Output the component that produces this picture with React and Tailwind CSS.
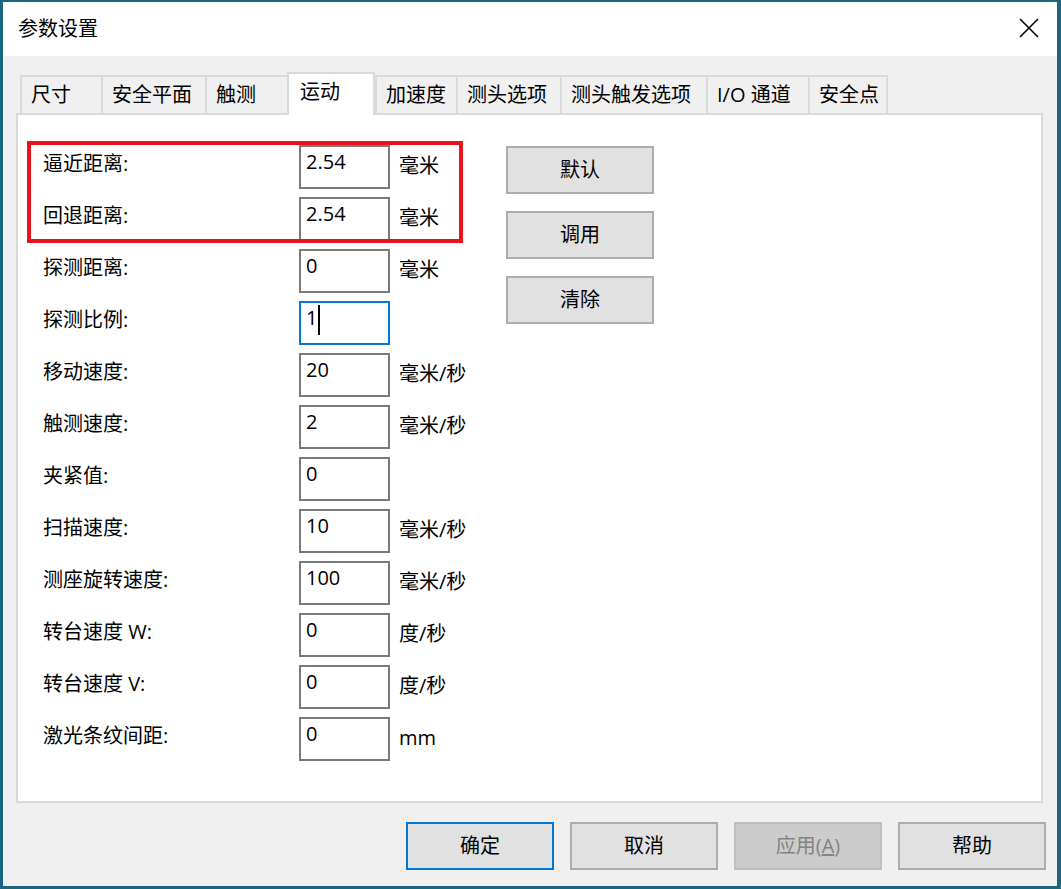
import React from "react";

const tabs = [
  { name: "尺寸", w: "w-[81px]" },
  { name: "安全平面", w: "w-[104px]" },
  { name: "触测", w: "w-[82px]" },
  { name: "运动", w: "w-[88px]", active: true },
  { name: "加速度", w: "w-[81px]" },
  { name: "测头选项", w: "w-[104px]" },
  { name: "测头触发选项", w: "w-[146px]" },
  { name: "I/O 通道", w: "w-[102px]" },
  { name: "安全点", w: "w-[80px]" },
];

const rows = [
  { label: "逼近距离:", value: "2.54", unit: "毫米" },
  { label: "回退距离:", value: "2.54", unit: "毫米" },
  { label: "探测距离:", value: "0", unit: "毫米" },
  { label: "探测比例:", value: "1", unit: "", focus: true },
  { label: "移动速度:", value: "20", unit: "毫米/秒" },
  { label: "触测速度:", value: "2", unit: "毫米/秒" },
  { label: "夹紧值:", value: "0", unit: "" },
  { label: "扫描速度:", value: "10", unit: "毫米/秒" },
  { label: "测座旋转速度:", value: "100", unit: "毫米/秒" },
  { label: "转台速度 W:", value: "0", unit: "度/秒" },
  { label: "转台速度 V:", value: "0", unit: "度/秒" },
  { label: "激光条纹间距:", value: "0", unit: "mm" },
];

function Field({ row }) {
  return (
    <div className="flex h-[44px] items-start">
      <div className="w-[256px] pt-[5px] leading-[28px]">{row.label}</div>
      <div
        className={
          "w-[91px] h-[44px] bg-white border-2 pl-[5px] pt-[1px] leading-[28px] flex items-start " +
          (row.focus ? "border-[#0078d7]" : "border-[#7a7a7a]")
        }
      >
        <span>{row.value}</span>
        {row.focus && <span className="ml-[1px] mt-[1px] w-[2px] h-[30px] bg-black" />}
      </div>
      <div className="ml-[9px] pt-[7px] leading-[28px]">{row.unit}</div>
    </div>
  );
}

export default function App() {
  return (
    <div className="w-[1061px] h-[889px] flex flex-col bg-[#f0f0f0] border-t-2 border-l-[3px] border-r-[4px] border-b-[3px] border-[#1a6580] text-[20px] text-black font-['Open_Sans','Noto_Sans_CJK_SC',sans-serif]">
      <div className="h-[54px] bg-white flex items-center justify-between pl-[15px] pr-[18px]">
        <span className="leading-[28px] -mt-[1px]">参数设置</span>
        <svg width="20" height="20" viewBox="0 0 20 20" className="-mt-[2px]">
          <path d="M1 1 L19 19 M19 1 L1 19" stroke="#000" strokeWidth="1.6" fill="none" />
        </svg>
      </div>

      <div className="flex-1 flex flex-col pl-[13px] pr-[11px] pt-[16px]">
        <div className="flex items-end h-[41px] ml-[4px]">
          {tabs.map((t) =>
            t.active ? (
              <div
                key={t.name}
                className={t.w + " h-[43px] -mb-[2px] relative z-10 bg-white border-2 border-b-0 border-[#dadada] pl-[11px] pt-[4px] leading-[28px]"}
              >
                {t.name}
              </div>
            ) : (
              <div
                key={t.name}
                className={t.w + " h-[38px] border-t-2 border-l-2 last:border-r-2 border-[#dadada] pl-[9px] pt-[4px] leading-[28px]"}
              >
                {t.name}
              </div>
            )
          )}
        </div>

        <div className="relative w-[1027px] h-[690px] bg-white border-2 border-[#dadada] flex pl-[25px] pt-[30px]">
          <div className="absolute left-[9px] top-[26px] w-[436px] h-[102px] border-4 border-[#e8141c]" />
          <div className="w-[463px] flex flex-col gap-[8px]">
            {rows.map((r, i) => (
              <Field key={i} row={r} />
            ))}
          </div>
          <div className="flex flex-col gap-[17px] mt-px">
            {["默认", "调用", "清除"].map((b) => (
              <div
                key={b}
                className="w-[148px] h-[48px] bg-[#e1e1e1] border-2 border-[#adadad] flex items-center justify-center leading-[28px]"
              >
                {b}
              </div>
            ))}
          </div>
        </div>

        <div className="flex justify-end gap-4 mt-[19px]">
          <div className="w-[148px] h-[48px] bg-[#e1e1e1] border-2 border-[#0078d7] flex items-center justify-center">
            确定
          </div>
          <div className="w-[148px] h-[48px] bg-[#e1e1e1] border-2 border-[#adadad] flex items-center justify-center">
            取消
          </div>
          <div className="w-[148px] h-[48px] bg-[#cccccc] border-2 border-[#bfbfbf] text-[#838383] flex items-center justify-center">
            应用(<span className="underline">A</span>)
          </div>
          <div className="w-[148px] h-[48px] bg-[#e1e1e1] border-2 border-[#adadad] flex items-center justify-center">
            帮助
          </div>
        </div>
      </div>
    </div>
  );
}
